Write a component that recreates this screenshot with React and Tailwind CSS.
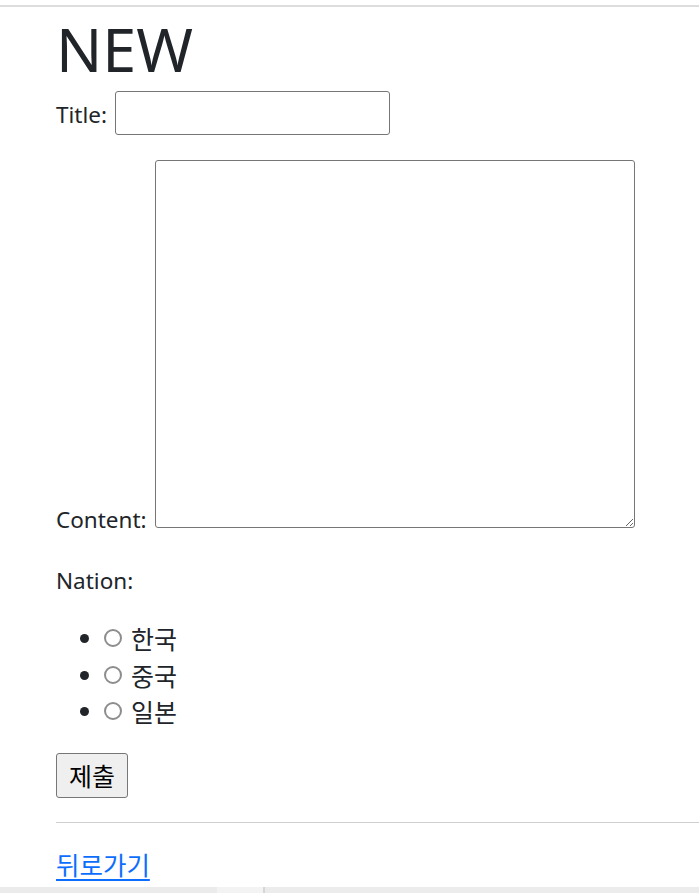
import React, { useState } from 'react';

const nations = ['한국', '중국', '일본'];

const App = () => {
  const [nation, setNation] = useState('');

  return (
    <div
      className="bg-white text-[#212529] pt-[5px]"
      style={{ fontFamily: '"Noto Sans", "Noto Sans CJK KR", sans-serif' }}
    >
      <div className="border-t-2 border-[#dddddd] pl-[56px]">
        <h1 className="text-[61px] leading-[72px] font-normal mt-[6px] mb-[6px]">NEW</h1>

        <form onSubmit={e => e.preventDefault()} className="text-[22.5px] leading-[36px]">
          {/* Title */}
          <div className="flex items-center gap-[8px]">
            <label htmlFor="title" className="pt-[4px]">Title:</label>
            <input
              id="title"
              type="text"
              className="w-[275px] h-[44px] border border-[#767676] rounded-[3px] bg-white px-2"
            />
          </div>

          {/* Content */}
          <div className="flex items-end gap-[8px] mt-[25px]">
            <label htmlFor="content" className="leading-[16px]">Content:</label>
            <textarea
              id="content"
              className="w-[480px] h-[368px] border border-[#767676] rounded-[3px] bg-white resize"
            />
          </div>

          {/* Nation */}
          <p className="mt-[35px]">Nation:</p>
          <ul className="list-disc pl-[48px] mt-[20px]" style={{ fontFamily: '"Noto Sans CJK KR", sans-serif' }}>
            {nations.map(n => (
              <li key={n} className="h-[36.5px]">
                <div className="inline-flex items-center gap-[9px]">
                  <div
                    onClick={() => setNation(n)}
                    className={
                      nation === n
                        ? 'w-[18px] h-[18px] min-w-[18px] rounded-full bg-white border-[5px] border-[#0075ff]'
                        : 'w-[18px] h-[18px] min-w-[18px] rounded-full bg-white border-2 border-[#8d8d8d]'
                    }
                  />
                  <span className="text-[25px]" onClick={() => setNation(n)}>{n}</span>
                </div>
              </li>
            ))}
          </ul>

          <button
            type="submit"
            className="mt-[24px] h-[45px] w-[72px] bg-[#efefef] border border-[#767676] rounded-[3px] text-[25px] leading-none text-black"
            style={{ fontFamily: '"Noto Sans CJK KR", sans-serif' }}
          >
            제출
          </button>
        </form>

        <hr className="mt-[24px] border-t border-[#cfcfcf]" />

        <div className="pt-[25px] pb-[7px] text-[25.5px] leading-[32px]" style={{ fontFamily: '"Noto Sans CJK KR", sans-serif' }}>
          <a href="#" className="text-[#0d6efd] underline underline-offset-[4px]">뒤로가기</a>
        </div>
      </div>

      {/* horizontal scrollbar strip */}
      <div className="flex h-[7px] bg-[#ebebeb]">
        <div className="w-[217px]" />
        <div className="w-[48px] bg-[#f3f3f3] border-r-2 border-[#d6d6d6]" />
        <div className="flex-1 ml-[5px] bg-[#ececec]" />
      </div>
    </div>
  );
};

export default App;
